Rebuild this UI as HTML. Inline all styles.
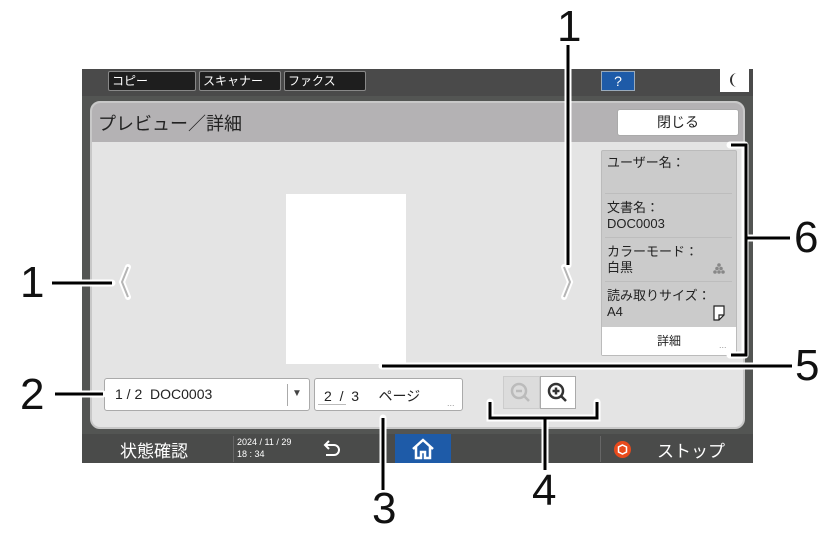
<!DOCTYPE html>
<html><head><meta charset="utf-8">
<style>
*{margin:0;padding:0;box-sizing:border-box}
body{width:838px;height:536px;background:#fff;position:relative;overflow:hidden;font-family:"Liberation Sans","Noto Sans CJK JP",sans-serif;color:#222}
.a{position:absolute}
.tab{position:absolute;top:71px;height:20px;background:#1e1e1e;border:1px solid #888;border-radius:2px;color:#fff;font-size:12px;line-height:18px;padding-left:3px}
.btnw{background:#fff;border:1px solid #aaa;border-radius:3px}
.info{font-size:13px;line-height:16px;color:#222}
.sep{position:absolute;left:605px;width:127px;height:1px;background:#bdbdbd}
.n{position:absolute;font-size:44px;line-height:44px;color:#111;font-family:"Liberation Sans",sans-serif}
</style></head><body>
<div class="a" style="left:82px;top:69px;width:671px;height:394px;background:#535553"></div>
<div class="a" style="left:82px;top:69px;width:671px;height:27px;background:#4a4a4a"></div>
<div class="tab" style="left:108px;width:88px">コピー</div>
<div class="tab" style="left:199px;width:82px">スキャナー</div>
<div class="tab" style="left:284px;width:82px">ファクス</div>
<div class="a" style="left:601px;top:71px;width:34px;height:20px;background:#1e5ba8;border:1px solid #9ab;color:#fff;font-size:14px;text-align:center;line-height:18px">?</div>
<div class="a" style="left:720px;top:69px;width:29px;height:23px;background:#fff"></div>
<svg class="a" style="left:728px;top:71px" width="14" height="18"><path d="M9 2 A7 7 0 0 0 9 16 A5 7 0 0 1 9 2 Z" fill="#333"/></svg>
<div class="a" style="left:90px;top:101px;width:655px;height:328px;background:#e4e4e4;border:2px solid #c8c8c8;border-radius:10px;overflow:hidden">
 <div class="a" style="left:0;top:0;width:651px;height:39px;background:#b4b2b4"></div>
 <div class="a" style="left:6px;top:7px;font-size:18px;color:#222">プレビュー／詳細</div>
 <div class="a btnw" style="left:525px;top:6px;width:122px;height:27px;font-size:14px;text-align:center;line-height:25px">閉じる</div>
</div>
<div class="a" style="left:286px;top:194px;width:120px;height:170px;background:#fff"></div>
<svg class="a" style="left:115px;top:262px" width="20" height="40"><path d="M13 5 L7 20 L13 35" fill="none" stroke="#fff" stroke-width="6" stroke-linecap="round"/><path d="M13 5 L7 20 L13 35" fill="none" stroke="#b5b5b5" stroke-width="2"/></svg>
<svg class="a" style="left:558px;top:262px" width="20" height="40"><path d="M6 5 L12 20 L6 35" fill="none" stroke="#fff" stroke-width="6" stroke-linecap="round"/><path d="M6 5 L12 20 L6 35" fill="none" stroke="#b5b5b5" stroke-width="2"/></svg>
<div class="a" style="left:601px;top:150px;width:136px;height:206px;background:#cbcbcb;border:1px solid #bbb;border-radius:2px"></div>
<div class="a info" style="left:607px;top:155px">ユーザー名：</div>
<div class="sep" style="top:193px"></div>
<div class="a info" style="left:607px;top:200px">文書名：<br>DOC0003</div>
<div class="sep" style="top:237px"></div>
<div class="a info" style="left:607px;top:244px">カラーモード：<br>白黒</div>
<svg class="a" style="left:712px;top:262px" width="14" height="12"><g fill="#888"><circle cx="7" cy="3" r="1.8"/><circle cx="5" cy="6.5" r="1.8"/><circle cx="9" cy="6.5" r="1.8"/><circle cx="3" cy="10" r="1.8"/><circle cx="7" cy="10" r="1.8"/><circle cx="11" cy="10" r="1.8"/></g></svg>
<div class="sep" style="top:281px"></div>
<div class="a info" style="left:607px;top:288px">読み取りサイズ：<br>A4</div>
<svg class="a" style="left:712px;top:305px" width="14" height="16"><path d="M2 1 H12 V10 L7 15 H2 Z M7 15 V10 H12" fill="#fff" stroke="#222" stroke-width="1.2"/></svg>
<div class="a" style="left:602px;top:327px;width:134px;height:28px;background:#fff;font-size:12px;text-align:center;line-height:28px">詳細</div>
<div class="a" style="left:719px;top:340px;font-size:9px;color:#999">...</div>
<div class="a btnw" style="left:104px;top:378px;width:206px;height:33px"></div>
<div class="a" style="left:115px;top:386px;font-size:14px">1 / 2&nbsp; DOC0003</div>
<div class="a" style="left:287px;top:384px;width:1px;height:22px;background:#aaa"></div>
<div class="a" style="left:292px;top:388px;font-size:10px;color:#444">▼</div>
<div class="a btnw" style="left:314px;top:378px;width:149px;height:33px"></div>
<div class="a" style="left:324px;top:386px;font-size:14px">2&nbsp; /&nbsp; 3 &nbsp;&nbsp;&nbsp; ページ</div>
<div class="a" style="left:318px;top:404px;width:28px;height:1px;background:#bbb"></div>
<div class="a" style="left:447px;top:398px;font-size:9px;color:#999">...</div>
<div class="a" style="left:503px;top:376px;width:37px;height:33px;background:#dcdcdc;border:1px solid #ccc"></div>
<div class="a btnw" style="left:540px;top:376px;width:36px;height:33px;border-radius:0"></div>
<svg class="a" style="left:508px;top:380px" width="26" height="26"><circle cx="11" cy="11" r="7" fill="none" stroke="#bbb" stroke-width="2.5"/><path d="M8 11H14M16 16L21 21" stroke="#bbb" stroke-width="2.5"/></svg>
<svg class="a" style="left:545px;top:380px" width="26" height="26"><circle cx="11" cy="11" r="7" fill="none" stroke="#333" stroke-width="2.5"/><path d="M7.5 11H14.5M11 7.5V14.5M16 16L21 21" stroke="#333" stroke-width="2.5"/></svg>
<div class="a" style="left:82px;top:434px;width:671px;height:29px;background:#4a4b4a"></div>
<div class="a" style="left:120px;top:437px;font-size:17px;color:#fff">状態確認</div>
<div class="a" style="left:233px;top:436px;width:1px;height:26px;background:#666"></div>
<div class="a" style="left:237px;top:436px;font-size:9px;line-height:12px;color:#fff">2024 / 11 / 29<br>18 : 34</div>
<svg class="a" style="left:320px;top:439px" width="24" height="20"><path d="M5 6 H14 A5 5 0 0 1 14 16 H6 M9 2 L5 6 L9 10" fill="none" stroke="#fff" stroke-width="2"/></svg>
<div class="a" style="left:395px;top:434px;width:56px;height:29px;background:#1e5ba8"></div>
<svg class="a" style="left:411px;top:438px" width="24" height="22"><path d="M2 11 L12 2 L22 11 M5 9 V20 H10 V14 H14 V20 H19 V9" fill="none" stroke="#fff" stroke-width="2.5"/></svg>
<div class="a" style="left:600px;top:436px;width:1px;height:26px;background:#666"></div>
<div class="a" style="left:614px;top:441px;width:17px;height:17px;border-radius:50%;background:#e84a1c"></div>
<svg class="a" style="left:614px;top:441px" width="17" height="17"><polygon points="8.5,4 12.5,6 12.5,11 8.5,13 4.5,11 4.5,6" fill="none" stroke="#fff" stroke-width="1.5"/></svg>
<div class="a" style="left:657px;top:437px;font-size:17px;color:#fff">ストップ</div>
<svg class="a" style="left:0;top:0" width="838" height="536">
<g fill="none" stroke="#fff" stroke-width="7" stroke-linecap="round">
<path d="M568 45 V265"/><path d="M52 283 H112"/><path d="M745 145 V355 M745 238 H790 M730 145 H745 M730 355 H745"/><path d="M382 366 H792"/><path d="M55 394 H103"/><path d="M383 418 V490"/><path d="M490 402 V418 H597 V402 M545 418 V470"/></g>
<g fill="none" stroke="#000" stroke-width="3">
<path d="M568 45 V265"/><path d="M52 283 H112"/><path d="M731 145 H746 V355 H731 M746 238 H790"/><path d="M382 366 H792"/><path d="M55 394 H103"/><path d="M383 418 V490"/><path d="M490 402 V418 H597 V402 M545 418 V470"/></g>
</svg>
<div class="n" style="left:557px;top:5px">1</div>
<div class="n" style="left:20px;top:261px">1</div>
<div class="n" style="left:794px;top:216px">6</div>
<div class="n" style="left:795px;top:344px">5</div>
<div class="n" style="left:20px;top:373px">2</div>
<div class="n" style="left:372px;top:487px">3</div>
<div class="n" style="left:532px;top:469px">4</div>
</body></html>
